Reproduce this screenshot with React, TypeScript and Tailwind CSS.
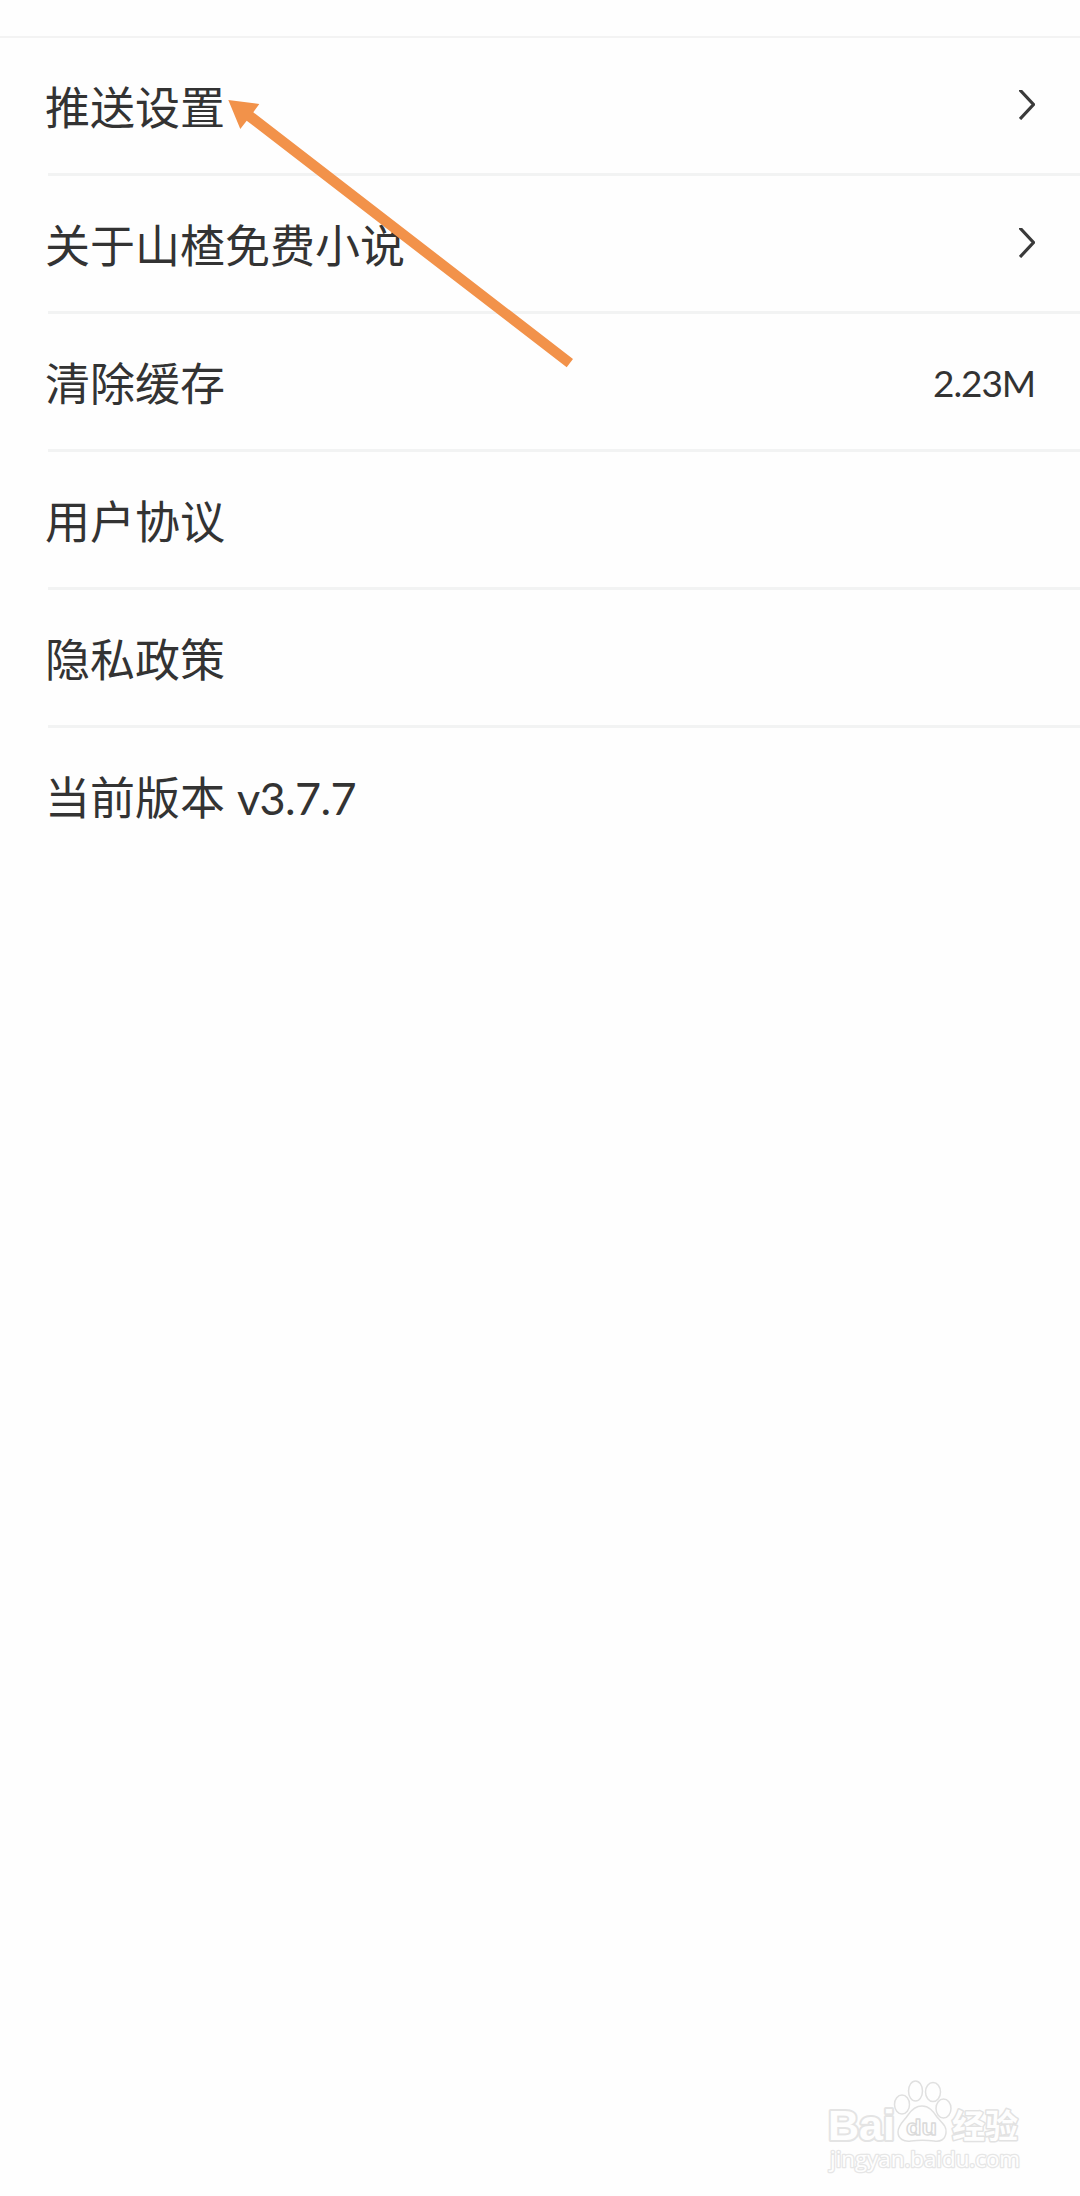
type Item = {
  label: string;
  version?: string;
  value?: string;
  arrow?: boolean;
};

const items: Item[] = [
  { label: "推送设置", arrow: true },
  { label: "关于山楂免费小说", arrow: true },
  { label: "清除缓存", value: "2.23M" },
  { label: "用户协议" },
  { label: "隐私政策" },
  { label: "当前版本", version: " v3.7.7" },
];

function Chevron() {
  return (
    <svg className="mb-0.5" width="16" height="30" viewBox="0 0 16 30" fill="none">
      <path d="M0.5 -0.5L14.5 14.5L1 29" stroke="#3a3a3a" strokeWidth="3.2" />
    </svg>
  );
}

function Row({ item, last }: { item: Item; last: boolean }) {
  return (
    <li
      className={`ml-12 flex h-[138px] items-center justify-between border-b-[3px] pr-[45px] ${
        last ? "border-transparent" : "border-[#f2f3f3]"
      }`}
    >
      <span className="-ml-[3px] pt-[5px] text-[45px] leading-none whitespace-pre">
        {item.label}
        {item.version && (
          <span className="ml-px tracking-[-0.6px]">{item.version}</span>
        )}
      </span>
      {item.value && (
        <span className="pt-0.5 text-[37px] leading-none tracking-[-1.1px]">
          {item.value}
        </span>
      )}
      {item.arrow && <Chevron />}
    </li>
  );
}

// Orange arrow pointing at the first row
function Pointer() {
  return (
    <svg
      className="pointer-events-none absolute top-[90px] left-[220px]"
      width="370"
      height="290"
      viewBox="220 90 370 290"
    >
      <path
        d="M228.3 100L259.3 104L253.3 112.3L573 359L566.7 367.3L246.7 120.7L240.3 129Z"
        fill="#f2924a"
      />
    </svg>
  );
}

function Watermark() {
  return (
    <svg
      className="pointer-events-none absolute right-[50px] bottom-[16px]"
      width="210"
      height="110"
      viewBox="820 2070 210 110"
      fill="#fefefe"
      stroke="#e0e0e0"
      strokeWidth="1.5"
      strokeLinejoin="round"
    >
      <text
        x="828"
        y="2140"
        fontFamily="Liberation Sans"
        fontWeight="700"
        fontSize="42"
        textLength="67"
        lengthAdjust="spacingAndGlyphs"
        stroke="#e4e4e4"
        strokeWidth="4"
        paintOrder="stroke"
      >
        Bai
      </text>
      {/* paw */}
      <ellipse cx="902" cy="2104.5" rx="7.5" ry="9.5" />
      <ellipse cx="915.5" cy="2091" rx="7" ry="10" />
      <ellipse cx="933" cy="2092" rx="7.5" ry="9.5" />
      <ellipse cx="943.5" cy="2108.5" rx="7.5" ry="9.5" />
      <path d="M922 2106C929 2106 933 2111 937 2117C942 2123 947 2126 946 2133C945 2140 940 2142 934 2141C926 2140 919 2140 911 2141C904 2142 898 2139 898 2132C898 2125 904 2121 908 2115C912 2109 916 2106 922 2106Z" />
      <text
        x="906"
        y="2135"
        fontFamily="Liberation Sans"
        fontWeight="700"
        fontSize="22"
        textLength="31"
        lengthAdjust="spacingAndGlyphs"
        stroke="#dadada"
        strokeWidth="1.3"
      >
        du
      </text>
      <text
        x="952"
        y="2138"
        fontFamily="Noto Sans CJK SC"
        fontWeight="700"
        fontSize="33"
        stroke="#e2e2e2"
        strokeWidth="3"
        paintOrder="stroke"
      >
        经验
      </text>
      <text
        x="830"
        y="2167"
        fontFamily="Open Sans"
        fontSize="22"
        textLength="190"
        lengthAdjust="spacingAndGlyphs"
        stroke="#e6e6e6"
        strokeWidth="2.6"
        paintOrder="stroke"
      >
        jingyan.baidu.com
      </text>
    </svg>
  );
}

export default function App() {
  return (
    <main className="relative h-[2196px] w-[1080px] overflow-hidden bg-[#fefefe] font-['Lato','Noto_Sans_CJK_SC',sans-serif] text-[#333]">
      <div className="h-[38px] border-b-2 border-[#f3f3f3]" />
      <ul>
        {items.map((item, index) => (
          <Row key={item.label} item={item} last={index === items.length - 1} />
        ))}
      </ul>
      <Pointer />
      <Watermark />
    </main>
  );
}
